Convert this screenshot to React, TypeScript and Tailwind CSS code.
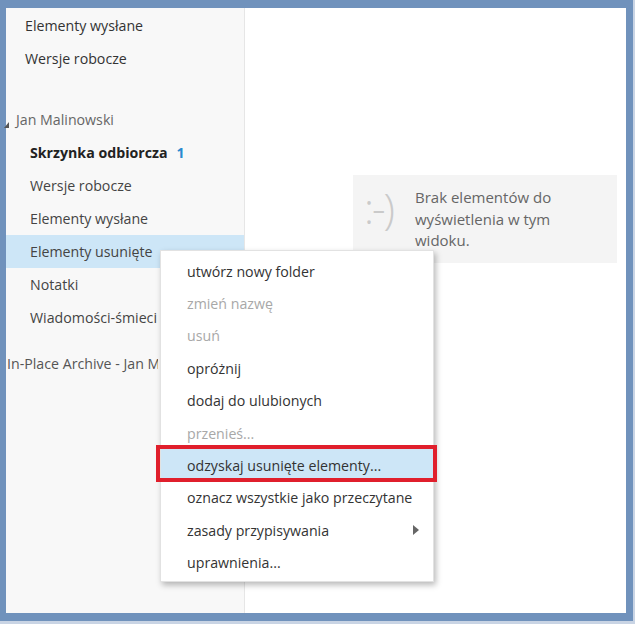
import React from 'react';

const font = { fontFamily: '"Open Sans", "Noto Sans", Arial, sans-serif' };

type MenuItem = { label: string; disabled?: boolean; active?: boolean; submenu?: boolean };

const menuItems: MenuItem[] = [
  { label: 'utwórz nowy folder' },
  { label: 'zmień nazwę', disabled: true },
  { label: 'usuń', disabled: true },
  { label: 'opróżnij' },
  { label: 'dodaj do ulubionych' },
  { label: 'przenieś...', disabled: true },
  { label: 'odzyskaj usunięte elementy...', active: true },
  { label: 'oznacz wszystkie jako przeczytane' },
  { label: 'zasady przypisywania', submenu: true },
  { label: 'uprawnienia...' },
];

const FolderRow: React.FC<{ label: string; active?: boolean }> = ({ label, active }) => (
  <div className={`h-[33px] flex items-center pl-[24px] text-[#444] whitespace-nowrap ${active ? 'bg-[#cde6f7]' : ''}`}>
    {label}
  </div>
);

const ContextMenu: React.FC = () => (
  <div className="absolute left-[160px] top-[250px] w-[274px] bg-white border border-[#e2e2e2] shadow-[2px_3px_6px_rgba(0,0,0,0.28)] pt-[4px] pb-[2px]">
    {menuItems.map((item) => (
      <div
        key={item.label}
        className={`relative h-[32.4px] flex items-center pl-[26px] pr-3 whitespace-nowrap ${
          item.disabled ? 'text-[#a8a8a8]' : 'text-[#333]'
        } ${item.active ? 'bg-[#cde6f7]' : ''}`}
      >
        <span className="flex-1">{item.label}</span>
        {item.submenu && (
          <svg width="6" height="10" viewBox="0 0 6 10" className="mr-[2px]">
            <path d="M0 0 L6 5 L0 10 Z" fill="#666" />
          </svg>
        )}
        {item.active && (
          <div className="absolute left-[-5px] right-[-4px] top-[-4px] bottom-[0px] border-4 border-[#e01f2c]" />
        )}
      </div>
    ))}
  </div>
);

export default function App() {
  return (
    <div className="relative w-[635px] h-[624px] bg-[#c9d4e4] pr-[2px] pb-[3px] text-[14.2px]" style={font}>
      <div className="w-full h-full flex border-t-[8px] border-l-[6px] border-r-[7px] border-b-[8px] border-[#7092bc] bg-white">
        <div className="w-[239px] h-full bg-[#f8f8f8] border-r border-[#e6e6e6] flex flex-col pt-[1px]">
          <div className="h-[33px] flex items-center pl-[19px] text-[#333]">Elementy wysłane</div>
          <div className="h-[33px] flex items-center pl-[19px] text-[#333]">Wersje robocze</div>
          <div className="h-[28px]" />
          <div className="relative h-[33px] flex items-center pl-[10px] text-[#666]">
            <svg width="5" height="6" viewBox="0 0 5 6" className="absolute left-[-2px] top-[19px]">
              <path d="M5 0 L5 6 L0 6 Z" fill="#555" />
            </svg>
            Jan Malinowski
          </div>
          <div className="h-[33px] flex items-center pl-[24px] text-[#222] font-bold whitespace-nowrap">
            Skrzynka odbiorcza
            <span className="ml-[9px] text-[#2a8ad0]">1</span>
          </div>
          <FolderRow label="Wersje robocze" />
          <FolderRow label="Elementy wysłane" />
          <FolderRow label="Elementy usunięte" active />
          <FolderRow label="Notatki" />
          <FolderRow label="Wiadomości-śmieci" />
          <div className="h-[13px]" />
          <div className="h-[33px] w-[152px] flex items-center pl-[1px] text-[#555] whitespace-nowrap overflow-hidden">
            In-Place Archive - Jan Malinowski
          </div>
        </div>
        <div className="flex-1 h-full bg-white pt-[167px] pl-[108px] pr-[9px]">
          <div className="h-[88px] bg-[#f4f4f4] flex items-start pt-[12px] pl-[11px]">
            <div className="w-[51px] text-[42px] leading-[40px] font-light text-[#cacaca] tracking-[-2px] mt-[1px]">:-)</div>
            <div className="text-[15px] leading-[21.5px] text-[#666] w-[170px]">
              Brak elementów do wyświetlenia w tym widoku.
            </div>
          </div>
        </div>
      </div>
      <ContextMenu />
    </div>
  );
}
